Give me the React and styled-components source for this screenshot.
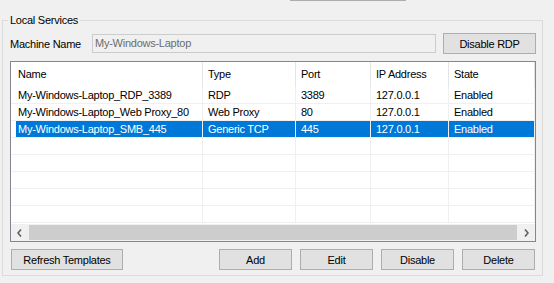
import styled, { createGlobalStyle } from "styled-components";

const GlobalStyle = createGlobalStyle`
  html, body {
    margin: 0;
    padding: 0;
    background: #f0f0f0;
  }
  body {
    font-family: "Liberation Sans", Arial, sans-serif;
    font-size: 11px;
    letter-spacing: -0.25px;
    color: #000;
  }
`;

const Page = styled.div`
  width: 554px;
  height: 283px;
  overflow: hidden;
`;

// bottom edge of a button that is cut off by the top of the window
const TopStub = styled.div`
  width: 116px;
  height: 1px;
  margin-left: 290px;
  background: #adadad;
`;

const GroupBox = styled.fieldset`
  box-sizing: border-box;
  width: 541px;
  margin: 13px 0 0 2px;
  padding: 0 6px 5px 7px;
  border: 1px solid #dcdcdc;
  min-width: 0;
`;

const Legend = styled.legend`
  padding: 0 2px;
  margin-left: -2px;
  line-height: 13px;
`;

const MachineRow = styled.div`
  display: flex;
  align-items: center;
  height: 21px;
  margin-top: 6px;
`;

const Label = styled.span`
  width: 82px;
  flex: none;
`;

const TextBox = styled.div`
  box-sizing: border-box;
  flex: 1;
  height: 19px;
  line-height: 17px;
  padding-left: 2px;
  border: 1px solid #cccccc;
  color: #6d6d6d;
  background: #f0f0f0;
`;

const Button = styled.button`
  box-sizing: border-box;
  flex: none;
  width: ${(p) => p.$w || 73}px;
  height: 21px;
  margin-left: ${(p) => p.$ml || 0}px;
  padding: 0;
  border: 1px solid #adadad;
  background: #e1e1e1;
  font: inherit;
  letter-spacing: inherit;
  font-weight: 400;
  color: #000;
`;

const ListView = styled.div`
  box-sizing: border-box;
  display: flex;
  flex-direction: column;
  height: 181px;
  margin-top: 7px;
  border: 1px solid #828790;
  background: #fff;
`;

const COLS = "192px 93px 75px 78px 1fr";

const Header = styled.div`
  display: grid;
  grid-template-columns: ${COLS};
  height: 25px;
  flex: none;
`;

const HeadCell = styled.div`
  padding-left: ${(p) => (p.$first ? 7 : 5)}px;
  line-height: 24px;
  border-right: 1px solid #e5e5e5;
`;

const Rows = styled.div`
  flex: 1;
  overflow: hidden;
`;

const Row = styled.div`
  display: grid;
  grid-template-columns: ${COLS};
  height: 17px;
  box-sizing: border-box;
  border-bottom: 1px solid #f0f0f0;
  color: ${(p) => (p.$selected ? "#fff" : "#000")};
`;

const Cell = styled.div`
  padding-left: ${(p) => (p.$first ? 7 : 5)}px;
  line-height: 16px;
  white-space: nowrap;
  overflow: hidden;
  border-right: 1px solid #f0f0f0;
  background: ${(p) =>
    !p.$selected
      ? "transparent"
      : p.$first
      ? "linear-gradient(to right, transparent 5px, #0078d7 5px)"
      : "#0078d7"};
`;

const ScrollBar = styled.div`
  display: flex;
  flex: none;
  height: 17px;
  background: #f0f0f0;
`;

const Arrow = styled.div`
  width: 17px;
  flex: none;
  display: flex;
  align-items: center;
  justify-content: center;
`;

const Track = styled.div`
  flex: 1;
  display: flex;
  padding: 1px 1px;
`;

const Thumb = styled.div`
  flex: 1;
  background: #cdcdcd;
`;

const ButtonRow = styled.div`
  display: flex;
  height: 21px;
  margin-top: 7px;
  padding: 0 1px;
`;

const Spacer = styled.div`
  flex: 1;
`;

const Chevron = ({ left }) => (
  <svg width="5" height="8" viewBox="0 0 5 8">
    <polyline
      points={left ? "4,0.5 1,4 4,7.5" : "1,0.5 4,4 1,7.5"}
      fill="none"
      stroke="#606060"
      strokeWidth="1.6"
    />
  </svg>
);

const columns = ["Name", "Type", "Port", "IP Address", "State"];

const services = [
  ["My-Windows-Laptop_RDP_3389", "RDP", "3389", "127.0.0.1", "Enabled"],
  ["My-Windows-Laptop_Web Proxy_80", "Web Proxy", "80", "127.0.0.1", "Enabled"],
  ["My-Windows-Laptop_SMB_445", "Generic TCP", "445", "127.0.0.1", "Enabled"],
];

const selectedIndex = 2;
const emptyRows = 5;

export default function App() {
  return (
    <Page>
      <GlobalStyle />
      <TopStub />
      <GroupBox>
        <Legend>Local Services</Legend>
        <MachineRow>
          <Label>Machine Name</Label>
          <TextBox>My-Windows-Laptop</TextBox>
          <Button $w={93} $ml={7}>Disable RDP</Button>
        </MachineRow>
        <ListView>
          <Header>
            {columns.map((c, i) => (
              <HeadCell key={c} $first={i === 0}>{c}</HeadCell>
            ))}
          </Header>
          <Rows>
            {services.map((s, r) => (
              <Row key={s[0]} $selected={r === selectedIndex}>
                {s.map((v, i) => (
                  <Cell key={i} $first={i === 0} $selected={r === selectedIndex}>
                    {v}
                  </Cell>
                ))}
              </Row>
            ))}
            {Array.from({ length: emptyRows }).map((_, r) => (
              <Row key={"e" + r}>
                {columns.map((c, i) => (
                  <Cell key={c} $first={i === 0} />
                ))}
              </Row>
            ))}
          </Rows>
          <ScrollBar>
            <Arrow><Chevron left /></Arrow>
            <Track><Thumb /></Track>
            <Arrow><Chevron /></Arrow>
          </ScrollBar>
        </ListView>
        <ButtonRow>
          <Button $w={112}>Refresh Templates</Button>
          <Spacer />
          <Button>Add</Button>
          <Button $ml={8}>Edit</Button>
          <Button $ml={8}>Disable</Button>
          <Button $ml={8}>Delete</Button>
        </ButtonRow>
      </GroupBox>
    </Page>
  );
}
